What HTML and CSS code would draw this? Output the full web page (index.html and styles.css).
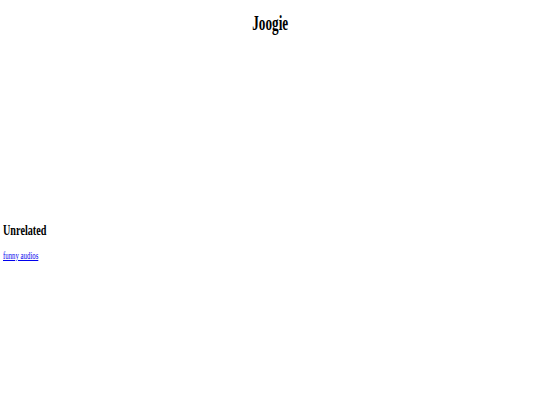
FILE: index.html
```html
<!DOCTYPE html>
<html>
<head>
<meta charset="utf-8">
<title>Joogie</title>
<link rel="stylesheet" href="styles.css">
</head>
<body>
<h1 class="title"><span class="squeeze squeeze-center">Joogie</span></h1>
<div class="player-space"></div>
<h2 class="section"><span class="squeeze squeeze-wide">Unrelated</span></h2>
<p class="links"><a class="squeeze squeeze-wide" href="#">funny audios</a></p>
</body>
</html>
```
FILE: styles.css
```css
html, body {
  margin: 0;
  padding: 0;
  background: #ffffff;
}
body {
  font-family: "Liberation Serif", "Times New Roman", serif;
  color: #000;
  padding: 0 3px;
}
.squeeze {
  display: inline-block;
  transform: scaleX(0.66);
  transform-origin: left center;
}
.squeeze-center {
  transform-origin: center center;
}
.squeeze-wide {
  transform: scaleX(0.68);
}
.title {
  font-size: 20px;
  line-height: 23px;
  font-weight: bold;
  text-align: center;
  margin: 12px 0 0;
}
.player-space {
  height: 187px;
}
.section {
  font-size: 15px;
  line-height: 17px;
  font-weight: bold;
  margin: 0;
}
.links {
  font-size: 10px;
  line-height: 12px;
  margin: 11px 0 0;
}
.links a {
  color: #0000ee;
  text-decoration: underline;
}
```
